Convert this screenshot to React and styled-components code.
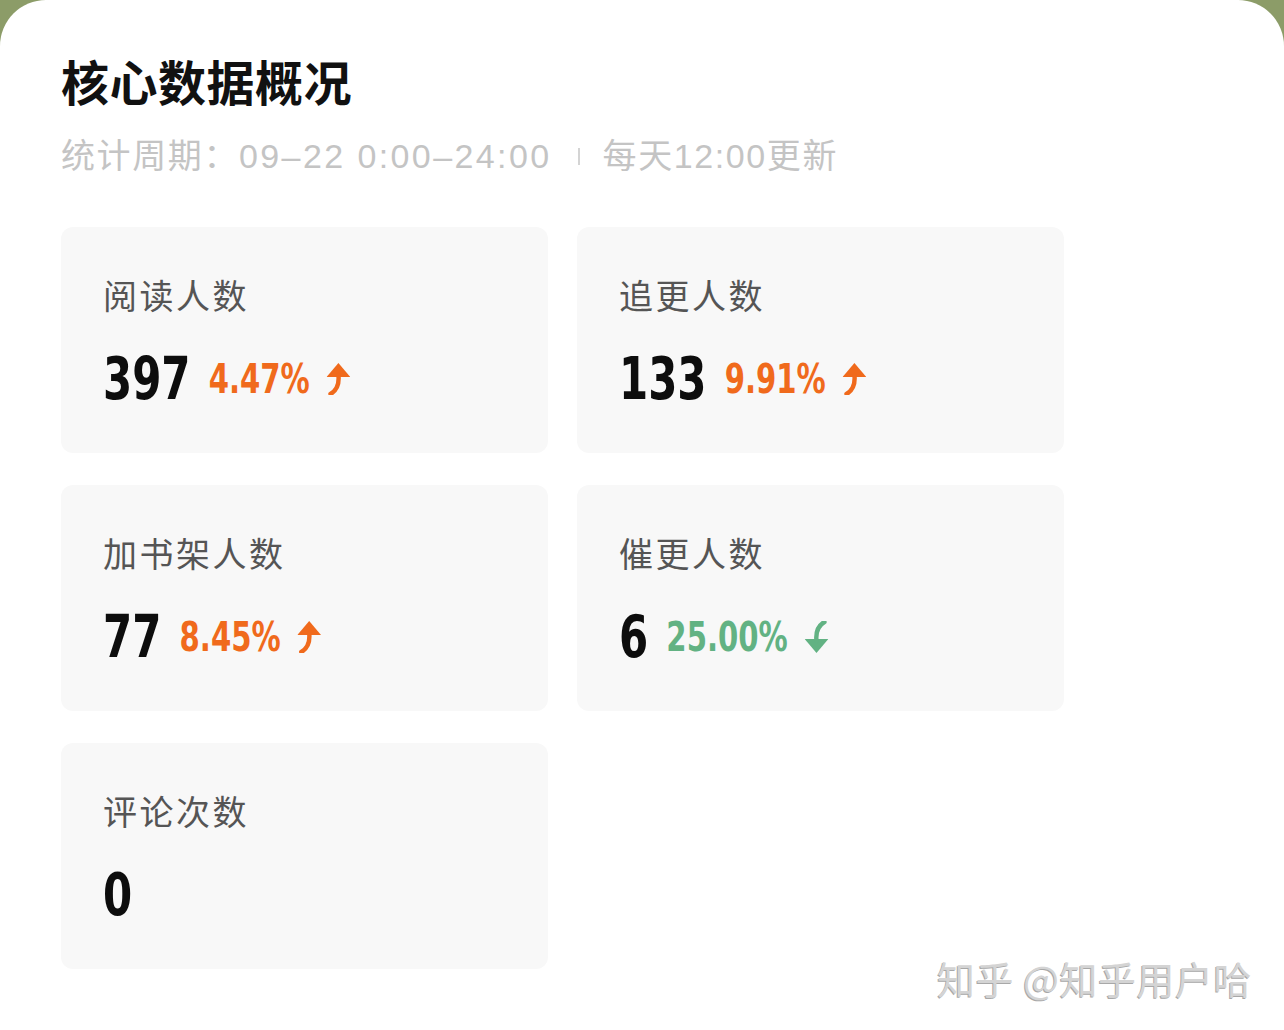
import React from 'react'
import styled, { createGlobalStyle } from 'styled-components'

const GlobalStyle = createGlobalStyle`
    html, body {
        margin: 0;
        padding: 0;
        background: #8c9c68;
    }
    body {
        font-family: "Noto Sans CJK SC", "Noto Sans", sans-serif;
    }
`

const Sheet = styled.div`
    position: relative;
    width: 1284px;
    height: 1030px;
    box-sizing: border-box;
    background: #ffffff;
    border-radius: 46px 46px 0 0;
    padding: 56px 0 0 61px;
    overflow: hidden;
`

const Title = styled.h1`
    margin: 0;
    font-size: 48px;
    line-height: 48px;
    font-weight: 700;
    color: #111;
    letter-spacing: 0.5px;
`

const Period = styled.div`
    display: flex;
    align-items: center;
    margin-top: 35px;
    font-family: "Liberation Sans", "Noto Sans CJK SC", sans-serif;
    font-size: 34px;
    line-height: 34px;
    color: #c4c4c4;
    letter-spacing: 1.6px;
`

const Stamp = styled.span`
    letter-spacing: 2.4px;
`

const Divider = styled.span`
    display: inline-block;
    width: 2px;
    height: 17px;
    background: #d4d4d4;
    margin: 0 23px 0 26px;
`

const Grid = styled.div`
    display: grid;
    grid-template-columns: repeat(2, 487px);
    grid-auto-rows: 226px;
    column-gap: 29px;
    row-gap: 32px;
    margin-top: 54px;
`

const Card = styled.div`
    background: #f8f8f8;
    border-radius: 12px;
    padding: 51px 0 0 42px;
    box-sizing: border-box;
`

const Label = styled.div`
    font-size: 34px;
    line-height: 34px;
    color: #555;
    letter-spacing: 2.5px;
`

/* the numbers are a condensed DIN face in the reference: squeeze the row */
const Row = styled.div`
    display: flex;
    align-items: center;
    margin-top: 37px;
    font-family: "DejaVu Sans Condensed", "Liberation Sans", sans-serif;
    font-weight: 700;
    transform: scaleX(0.79);
    transform-origin: left center;
`

const Value = styled.span`
    font-size: 59px;
    line-height: 60px;
    color: #0d0d0d;
`

const Change = styled.span`
    display: inline-flex;
    align-items: center;
    margin-left: 23px;
    font-size: 41px;
    line-height: 41px;
    color: ${p => (p.$down ? '#62b283' : '#f06a1c')};
`

const Arrow = styled.svg`
    width: 30px;
    height: 32px;
    margin-left: 21px;
    transform: ${p => (p.$down ? 'rotate(180deg)' : 'none')};
`

const Watermark = styled.div`
    position: absolute;
    right: 32px;
    bottom: 33px;
    font-size: 38px;
    line-height: 38px;
    color: #d4d4d4;
    text-shadow: -1px 1px 0 #a8a8a8;
    letter-spacing: 0.5px;
`

function TrendArrow({ down }) {
    return (
        <Arrow $down={down} viewBox="0 0 24 32" preserveAspectRatio="none">
            <path d="M12 0 L24 14 L0 14 Z" fill="currentColor" />
            <path d="M12 12 C13 21 11 27 4 31" fill="none" stroke="currentColor" strokeWidth="4.5" strokeLinecap="round" />
        </Arrow>
    )
}

const stats = [
    { label: '阅读人数', value: '397', change: '4.47%' },
    { label: '追更人数', value: '133', change: '9.91%' },
    { label: '加书架人数', value: '77', change: '8.45%' },
    { label: '催更人数', value: '6', change: '25.00%', down: true },
    { label: '评论次数', value: '0' },
]

export default function App() {
    return (
        <>
            <GlobalStyle />
            <Sheet>
                <Title>核心数据概况</Title>
                <Period>
                    统计周期：<Stamp>09–22 0:00–24:00</Stamp>
                    <Divider />
                    每天12:00更新
                </Period>
                <Grid>
                    {stats.map(s => (
                        <Card key={s.label}>
                            <Label>{s.label}</Label>
                            <Row>
                                <Value>{s.value}</Value>
                                {s.change && (
                                    <Change $down={s.down}>
                                        {s.change}
                                        <TrendArrow down={s.down} />
                                    </Change>
                                )}
                            </Row>
                        </Card>
                    ))}
                </Grid>
                <Watermark>知乎 @知乎用户哈</Watermark>
            </Sheet>
        </>
    )
}
